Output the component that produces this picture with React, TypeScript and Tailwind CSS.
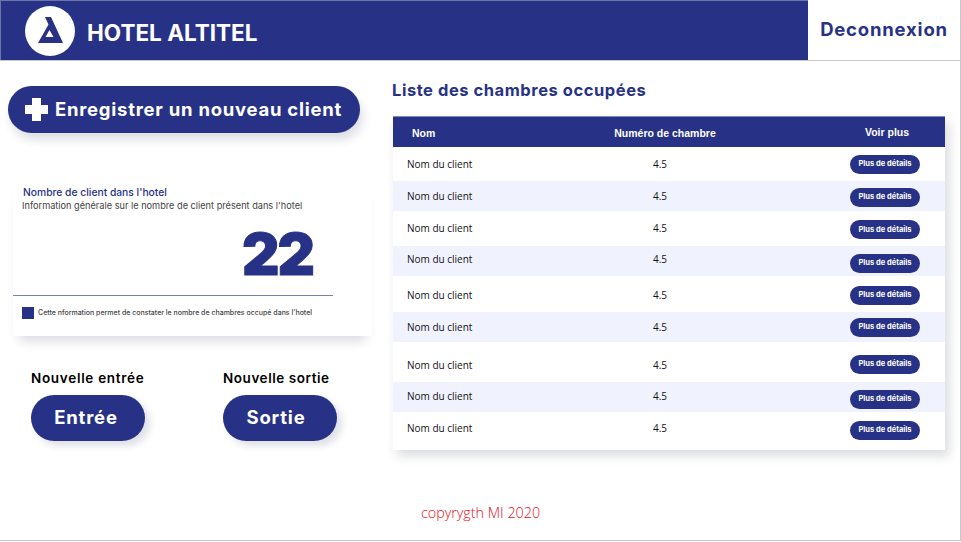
const rows = [
  { h: "h-[34px]", alt: false, shift: "pb-0", pill: "pt-0" },
  { h: "h-[30px]", alt: true, shift: "pb-0", pill: "pt-[2px]" },
  { h: "h-[35px]", alt: false, shift: "pb-0", pill: "pt-[2px]" },
  { h: "h-[30px]", alt: true, shift: "pb-1", pill: "pt-[8px]" },
  { h: "h-[36px]", alt: false, shift: "pt-[2px]", pill: "pt-0" },
  { h: "h-[30px]", alt: true, shift: "pb-0", pill: "pt-0" },
  { h: "h-[40px]", alt: false, shift: "pt-[6px]", pill: "pb-[2px]" },
  { h: "h-[30px]", alt: true, shift: "pb-[2px]", pill: "pt-[6px]" },
  { h: "h-[38px]", alt: false, shift: "pb-[6px]", pill: "pt-[4px]" },
];

export default function App() {
  return (
    <div className="w-[961px] h-[541px] bg-white border-b border-r border-[#c8c8c8] font-['Inter',sans-serif] overflow-hidden">
      <header className="flex h-[61px] border-b border-[#c8c8c8]">
        <div className="w-[808px] bg-[#273286] flex items-center pl-6 gap-3 border-t border-l border-[#6d74a8]">
          <div className="w-[50px] h-[50px] rounded-full bg-white flex items-center justify-center">
            <svg width="30" height="28" viewBox="0 0 30 28">
              <path fillRule="evenodd" fill="#273286" d="M10 0H16L28 26H3L13.5 7.5ZM14.5 13L10.5 20H18.5Z" />
            </svg>
          </div>
          <span className="text-white text-[22.5px] font-bold pt-[5px]">HOTEL ALTITEL</span>
        </div>
        <div className="flex-1 flex items-center justify-center text-[#273286] text-[18.5px] font-bold tracking-[0.8px]">Deconnexion</div>
      </header>
      <main className="flex">
        <section className="w-[372px] shrink-0">
          <button className="ml-2 mt-[25px] w-[352px] h-[47px] rounded-full bg-[#273286] text-white flex items-center pl-[17px] gap-[7px] shadow-[3px_7px_10px_rgba(30,40,90,0.15)]">
            <span className="relative w-[23px] h-[23px] shrink-0">
              <span className="absolute left-[7px] top-0 w-[9px] h-[23px] bg-white" />
              <span className="absolute left-0 top-[7px] w-[23px] h-[9px] bg-white" />
            </span>
            <span className="text-[18.5px] font-bold whitespace-nowrap tracking-[0.75px]">Enregistrer un nouveau client</span>
          </button>
          <div className="ml-[13px] mt-[47px] w-[359px] h-[156px] bg-white shadow-[0_11px_10px_-6px_rgba(30,40,60,0.16)]">
            <p className="pl-[10px] pt-[5px] text-[#273286] text-[10.3px] font-medium leading-[14px]">Nombre de client dans l'hotel</p>
            <p className="pl-[9px] text-[#444] text-[9.2px] leading-[14px] whitespace-nowrap">Information générale sur le nombre de client présent dans l'hotel</p>
            <div className="w-[320px] h-[83px] border-b border-[#7a80ad] pl-[229px] pt-[6px] text-[#273286] text-[58px] font-black leading-[70px] tracking-[-2px] [-webkit-text-stroke:1px_#273286]">22</div>
            <div className="flex items-center pl-[9px] pt-[11px] gap-[4px]">
              <span className="w-[12px] h-[12px] bg-[#273286]" />
              <span className="text-[#444] text-[7px] font-medium whitespace-nowrap">Cette nformation permet de constater le nombre de chambres occupé dans l'hotel</span>
            </div>
          </div>
          <div className="flex mt-[34px] ml-[31px] gap-[78px]">
            <div className="w-[114px]">
              <p className="text-black text-[13.5px] font-semibold leading-[17px] whitespace-nowrap tracking-[0.7px]">Nouvelle entrée</p>
              <button className="mt-[8px] w-[114px] h-[46px] rounded-full bg-[#273286] text-white text-[18.5px] font-bold tracking-[0.8px] shadow-[5px_5px_7px_rgba(30,40,90,0.14)] pr-[4px]">Entrée</button>
            </div>
            <div className="w-[114px]">
              <p className="text-black text-[13.5px] font-semibold leading-[17px] whitespace-nowrap tracking-[0.55px]">Nouvelle sortie</p>
              <button className="mt-[8px] w-[114px] h-[46px] rounded-full bg-[#273286] text-white text-[18.5px] font-bold tracking-[0.8px] shadow-[5px_5px_7px_rgba(30,40,90,0.14)] pr-[8px]">Sortie</button>
            </div>
          </div>
        </section>
        <section className="flex-1 pl-5">
          <h2 className="mt-[19px] text-[#273286] text-[16.5px] font-bold leading-[20px] tracking-[0.55px]">Liste des chambres occupées</h2>
          <div className="ml-px mt-[16px] w-[552px] bg-white shadow-[4px_6px_10px_rgba(30,40,60,0.16)]">
            <div className="h-[31px] bg-[#273286] border-t border-[#7f88c0] pt-[3px] flex items-center text-white text-[10.5px] font-bold font-['Liberation_Sans',sans-serif]">
              <span className="w-[64px] pl-[19px]">Nom</span>
              <span className="w-[406px] text-center pl-[10px]">Numéro de chambre</span>
              <span className="flex-1 text-center pr-[34px] pb-px">Voir plus</span>
            </div>
            {rows.map((r, i) => (
              <div key={i} className={`${r.h} ${r.shift} flex items-center text-[#111] text-[10px] font-['Open_Sans',sans-serif] ${r.alt ? "bg-[#f0f3fd]" : "bg-white"}`}>
                <span className="w-[140px] pl-[14px] whitespace-nowrap">Nom du client</span>
                <span className="w-[254px] text-center">4.5</span>
                <span className={`ml-[63px] flex ${r.pill}`}>
                  <span className="w-[70px] h-[19px] rounded-full bg-[#273286] text-white text-[7.5px] font-bold flex items-center justify-center font-['Inter',sans-serif] whitespace-nowrap">Plus de détails</span>
                </span>
              </div>
            ))}
          </div>
          <p className="mt-[53px] ml-[29px] text-[#e01020] text-[14.3px] font-light font-['Open_Sans',sans-serif] leading-[20px]">copyrygth MI 2020</p>
        </section>
      </main>
    </div>
  );
}
